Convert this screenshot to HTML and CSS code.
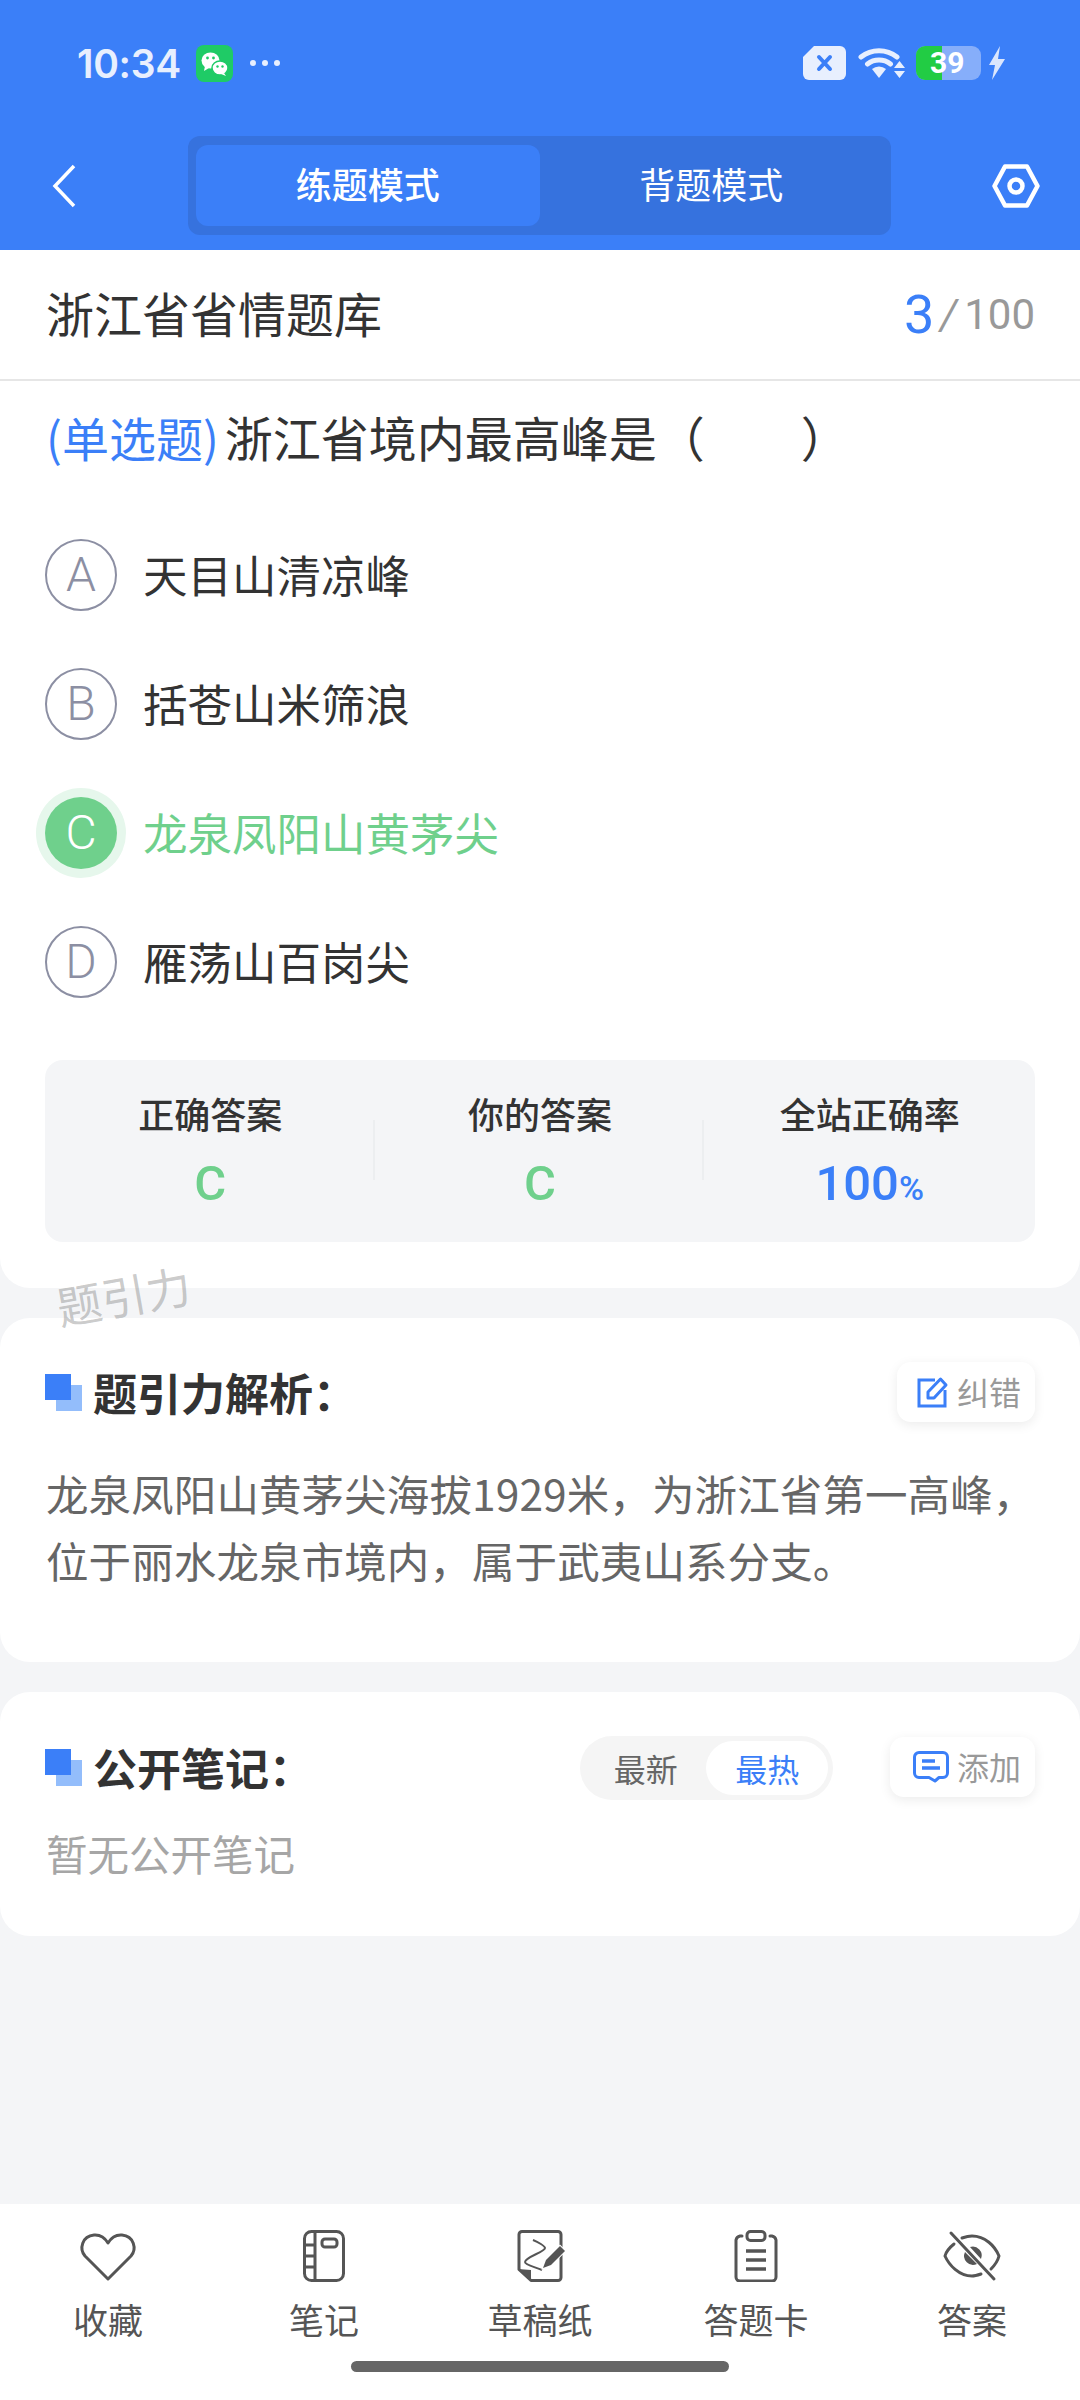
FILE: index.html
```html
<!DOCTYPE html>
<html lang="zh-CN">
<head>
    <meta charset="UTF-8">
    <meta name="viewport" content="width=device-width, initial-scale=1.0">
    <title>练题模式</title>
    <link rel="stylesheet" href="styles.css">
</head>
<body>
    <header class="top">
        <div class="status">
            <div class="status-left">
                <span class="time">10:34</span>
                <svg class="wechat" viewBox="0 0 37 37"><rect width="37" height="37" rx="8" fill="#1fcb66"/><ellipse cx="14.5" cy="15.5" rx="9" ry="8" fill="#fff"/><path d="M9 21l-1 5 5-3z" fill="#fff"/><ellipse cx="24" cy="23" rx="8" ry="7" fill="#fff" stroke="#1fcb66" stroke-width="1.5"/><path d="M28 28l2 3-5-2z" fill="#fff"/><circle cx="11.5" cy="13" r="1.4" fill="#1fcb66"/><circle cx="17.5" cy="13" r="1.4" fill="#1fcb66"/><circle cx="21.5" cy="21.5" r="1.2" fill="#1fcb66"/><circle cx="26.5" cy="21.5" r="1.2" fill="#1fcb66"/></svg>
                <span class="dots"><i></i><i></i><i></i></span>
            </div>
            <div class="status-right">
                <svg class="sim" viewBox="0 0 43 34"><path d="M11 0h26a6 6 0 0 1 6 6v22a6 6 0 0 1-6 6H6a6 6 0 0 1-6-6V11z" fill="#e8effe"/><path d="M16 11l11 12M27 11L16 23" stroke="#3b7ff8" stroke-width="4" stroke-linecap="round"/></svg>
                <svg class="wifi" viewBox="0 0 48 34"><path d="M3 11a29 29 0 0 1 36 0M9.500 18a19 19 0 0 1 23 0" fill="none" stroke="#e8effe" stroke-width="5" stroke-linecap="round"/><path d="M14 23a11 11 0 0 1 14 0l-7 9z" fill="#e8effe"/><path d="M36 22h11l-5.500-7zM36 25h11l-5.500 7z" fill="#e8effe"/></svg>
                <div class="battery"><div class="battery-fill"></div><span class="battery-num">39</span></div>
                <svg class="bolt" viewBox="0 0 18 34"><path d="M12 0L1 19h6L4 34l13-21h-7z" fill="#dbe6fd"/></svg>
            </div>
        </div>
        <nav class="nav">
            <svg class="back" viewBox="0 0 24 44"><path d="M22 2L3 22l19 20" fill="none" stroke="#fff" stroke-width="3.500"/></svg>
            <div class="mode-tabs">
                <div class="mode-tab active">练题模式</div>
                <div class="mode-tab">背题模式</div>
            </div>
            <svg class="gear" viewBox="0 0 48 44"><path d="M13 2.500h22L45.500 22 35 41.500H13L2.500 22z" fill="none" stroke="#fff" stroke-width="4.500" stroke-linejoin="round"/><circle cx="24" cy="22" r="6.500" fill="none" stroke="#fff" stroke-width="4.500"/></svg>
        </nav>
    </header>

    <section class="question-card">
        <div class="subject">
            <span class="subject-name">浙江省省情题库</span>
            <span class="count"><b>3</b><i>/</i>100</span>
        </div>
        <div class="stem"><span class="stem-type">(单选题)</span>浙江省境内最高峰是（　　）</div>
        <div class="option"><span class="letter">A</span><span class="option-text">天目山清凉峰</span></div>
        <div class="option"><span class="letter">B</span><span class="option-text">括苍山米筛浪</span></div>
        <div class="option right"><span class="letter">C</span><span class="option-text">龙泉凤阳山黄茅尖</span></div>
        <div class="option"><span class="letter">D</span><span class="option-text">雁荡山百岗尖</span></div>
        <div class="stats">
            <div class="stat"><p>正确答案</p><strong class="green">C</strong></div>
            <div class="stat-line"></div>
            <div class="stat"><p>你的答案</p><strong class="green">C</strong></div>
            <div class="stat-line"></div>
            <div class="stat"><p>全站正确率</p><strong class="blue">100<small>%</small></strong></div>
        </div>
    </section>
    <div class="watermark">题引力</div>

    <section class="card analysis">
        <div class="card-head">
            <span class="blocks"></span>
            <h2>题引力解析：</h2>
            <div class="mini-btn fix">
                <svg viewBox="0 0 32 32" width="32" height="32"><path d="M18 4H2v26h26V14" fill="none" stroke="#3b7ff8" stroke-width="3"/><path d="M11 16v6h6L29 9l-5.500-6z" fill="none" stroke="#3b7ff8" stroke-width="3" stroke-linejoin="round"/></svg>
                <span>纠错</span>
            </div>
        </div>
        <p class="analysis-text">龙泉凤阳山黄茅尖海拔1929米，为浙江省第一高峰，<br>位于丽水龙泉市境内，属于武夷山系分支。</p>
    </section>

    <section class="card notes">
        <div class="card-head">
            <span class="blocks"></span>
            <h2>公开笔记：</h2>
            <div class="sort">
                <span>最新</span>
                <span class="active">最热</span>
            </div>
            <div class="mini-btn">
                <svg viewBox="0 0 36 32" width="36" height="32"><path d="M6 1.500h24a4.500 4.500 0 0 1 4.500 4.500v16a4.500 4.500 0 0 1-4.500 4.500h-4L22 30l-6-3.500H6A4.500 4.500 0 0 1 1.500 22V6A4.500 4.500 0 0 1 6 1.500z" fill="none" stroke="#3b7ff8" stroke-width="3" stroke-linejoin="round"/><path d="M9 10h13M9 17h18" stroke="#3b7ff8" stroke-width="3.500"/></svg>
                <span>添加</span>
            </div>
        </div>
        <p class="empty">暂无公开笔记</p>
    </section>

    <footer class="tabbar">
        <div class="tab-items">
            <div class="tab-item">
                <svg viewBox="0 0 56 52"><path d="M28 49L5 26C-1 19 2 6 14 5c6-.5 11 3 14 8 3-5 8-8.500 14-8 12 1 15 14 9 21z" fill="none" stroke="#555" stroke-width="3" stroke-linejoin="round"/></svg>
                <span>收藏</span>
            </div>
            <div class="tab-item">
                <svg viewBox="0 0 56 52"><rect x="8.500" y="1.500" width="39" height="49" rx="7" fill="none" stroke="#555" stroke-width="3"/><path d="M19 2v48M9 15h10M9 26h10M9 37h10" stroke="#555" stroke-width="3" fill="none"/><rect x="26" y="9" width="15" height="8" rx="3" fill="none" stroke="#555" stroke-width="3"/></svg>
                <span>笔记</span>
            </div>
            <div class="tab-item">
                <svg viewBox="0 0 60 52"><path d="M21 50.500h27a3 3 0 0 0 3-3V4.500a3 3 0 0 0-3-3H12a3 3 0 0 0-3 3v35z" fill="none" stroke="#555" stroke-width="3" stroke-linejoin="round"/><path d="M8 39l13 1v11z" fill="#555"/><path d="M23 10c5 2 12 6 12 8 0 4-20 9-20 14 0 3 10 5 17 8" fill="none" stroke="#555" stroke-width="2"/><path d="M33 38l3-8 14-14 5 5-14 14z" fill="#555" stroke="#fff" stroke-width="2" paint-order="stroke"/></svg>
                <span>草稿纸</span>
            </div>
            <div class="tab-item">
                <svg viewBox="0 0 56 52"><path d="M14 6h-2a5 5 0 0 0-4 4v37a4 4 0 0 0 4 4h32a4 4 0 0 0 4-4V10a5 5 0 0 0-4-4h-2" fill="none" stroke="#555" stroke-width="3" stroke-linecap="round"/><rect x="19" y="1.500" width="18" height="9" rx="3.500" fill="none" stroke="#555" stroke-width="3"/><path d="M18 21h20M18 30h20M18 39h20" stroke="#555" stroke-width="3.500" fill="none"/></svg>
                <span>答题卡</span>
            </div>
            <div class="tab-item">
                <svg viewBox="0 0 60 52"><path d="M12 14C7 18 4 22 3 26c4 9 14 20 27 20 3 0 6-1 9-2M20 8c3-1 6-2 10-2 13 0 23 10 27 20-1 4-4 9-8 13" fill="none" stroke="#555" stroke-width="3" stroke-linecap="round"/><path d="M9 3l43 46" stroke="#555" stroke-width="3" stroke-linecap="round"/><path d="M23 22a9 9 0 0 0 12 12zM28 17a9 9 0 0 1 11 12z" fill="#555"/></svg>
                <span>答案</span>
            </div>
        </div>
        <div class="home-bar"></div>
    </footer>
</body>
</html>
```

FILE: styles.css
```css
* {
    box-sizing: border-box;
}

body {
    font-family: "Noto Sans CJK SC", "Noto Sans", sans-serif;
    margin: 0;
    width: 1080px;
    height: 2400px;
    display: flex;
    flex-direction: column;
    position: relative;
    overflow: hidden;
    background-color: #f4f5f7;
    color: #333;
}

/* Blue header */
.top {
    height: 250px;
    background-color: #3b7ff8;
}

.status {
    height: 126px;
    padding: 0 74px 0 77px;
    display: flex;
    justify-content: space-between;
    align-items: center;
}

.status-left,
.status-right {
    display: flex;
    align-items: center;
}

.time {
    font-family: Inter, sans-serif;
    font-size: 39px;
    font-weight: 600;
    color: #e8effe;
    letter-spacing: -0.3px;
    width: 119px;
}

.wechat {
    width: 37px;
    height: 37px;
}

.dots {
    display: flex;
    gap: 6px;
    margin-left: 17px;
}

.dots i {
    width: 6px;
    height: 6px;
    border-radius: 50%;
    background-color: #e8effe;
}

.sim {
    width: 43px;
    height: 34px;
}

.wifi {
    width: 48px;
    height: 34px;
    margin-left: 12px;
}

.battery {
    width: 65px;
    height: 34px;
    margin-left: 10px;
    border-radius: 9px;
    background-color: #86aefa;
    position: relative;
}

.battery-fill {
    width: 26px;
    height: 34px;
    border-radius: 9px 0 0 9px;
    background-color: #22cc44;
}

.battery-num {
    position: absolute;
    left: 14px;
    top: 0;
    font-family: Roboto, sans-serif;
    font-size: 30px;
    line-height: 34px;
    font-weight: 700;
    color: #fff;
}

.bolt {
    width: 18px;
    height: 34px;
    margin-left: 7px;
}

.nav {
    height: 124px;
    padding: 10px 40px 15px 52px;
    display: flex;
    justify-content: space-between;
    align-items: center;
}

.back {
    width: 24px;
    height: 44px;
}

.gear {
    width: 48px;
    height: 44px;
}

.mode-tabs {
    width: 703px;
    height: 99px;
    padding: 9px 8px;
    margin-left: 11px;
    background-color: #3672de;
    border-radius: 12px;
    display: flex;
}

.mode-tab {
    width: 344px;
    height: 81px;
    font-size: 36px;
    line-height: 76px;
    text-align: center;
    color: #fff;
    border-radius: 12px;
}

.mode-tab.active {
    background-color: #3b7ff8;
    font-weight: 500;
}

/* Question */
.question-card {
    height: 1038px;
    background-color: #fff;
    border-radius: 0 0 30px 30px;
}

.subject {
    height: 131px;
    padding: 0 45px 0 46px;
    display: flex;
    justify-content: space-between;
    align-items: center;
    border-bottom: 2px solid #e6e6e6;
}

.subject-name {
    font-size: 48px;
    margin-bottom: 5px;
}

.count {
    font-family: Roboto, sans-serif;
    font-size: 42px;
    color: #999;
    display: flex;
    align-items: center;
}

.count b {
    font-size: 54px;
    font-weight: 400;
    color: #3b7ff8;
}

.count i {
    margin: 0 7px 0 6px;
}

.stem {
    height: 129px;
    padding: 26px 0 0 46px;
    font-size: 48px;
    line-height: 58px;
}

.stem-type {
    color: #3b7ff8;
    font-size: 47px;
    margin-right: 6px;
}

.option {
    height: 129px;
    padding-left: 45px;
    display: flex;
    align-items: center;
    gap: 26px;
    font-size: 44.5px;
}

.option-text {
    margin-bottom: 3px;
}

.letter {
    width: 72px;
    height: 72px;
    border: 2px solid #8c8fa3;
    border-radius: 50%;
    font-family: Roboto, sans-serif;
    font-size: 48px;
    font-weight: 300;
    color: #8c8fa3;
    display: flex;
    align-items: center;
    justify-content: center;
}

.option.right {
    color: #6fd08c;
}

.option.right .letter {
    border: none;
    background-color: #6fd08c;
    color: #fff;
    box-shadow: 0 0 0 9px #e6f7ec;
}

.stats {
    margin: 34px 45px 0;
    height: 182px;
    background-color: #f4f5f7;
    border-radius: 18px;
    display: flex;
}

.stat {
    flex: 1;
    text-align: center;
}

.stat p {
    margin: 31px 0 0;
    font-size: 36px;
    line-height: 44px;
    font-weight: 500;
}

.stat strong {
    display: block;
    margin-top: 21px;
    font-family: Roboto, sans-serif;
    font-size: 49px;
    line-height: 56px;
    font-weight: 500;
}

.stat small {
    font-size: 34px;
}

.green {
    color: #6fd08c;
}

.blue {
    color: #3b7ff8;
}

.stat-line {
    width: 2px;
    height: 60px;
    margin: 60px 0 0 -3px;
    background-color: #eceef0;
}

.watermark {
    position: absolute;
    left: 56px;
    top: 1267px;
    font-size: 45px;
    line-height: 56px;
    color: rgba(120, 120, 120, 0.4);
    transform: rotate(-10deg);
}

/* Cards below the question */
.card {
    margin-top: 30px;
    background-color: #fff;
    border-radius: 30px;
    padding: 0 45px;
}

.analysis {
    height: 344px;
    padding-top: 44px;
}

.notes {
    height: 244px;
    padding-top: 45px;
}

.card-head {
    display: flex;
    align-items: center;
    height: 60px;
}

.blocks {
    width: 37px;
    height: 37px;
    position: relative;
    flex-shrink: 0;
    margin-right: 11px;
}

.blocks::before,
.blocks::after {
    content: "";
    position: absolute;
    width: 26px;
    height: 26px;
}

.blocks::before {
    left: 11px;
    top: 11px;
    background-color: #93bdfb;
}

.blocks::after {
    left: 0;
    top: 0;
    background-color: #3b7ff8;
}

.card-head h2 {
    margin: 0;
    font-size: 44px;
    line-height: 60px;
    font-weight: 700;
    flex: 1;
    color: #333;
}

.mini-btn {
    height: 60px;
    padding: 0 14px 0 23px;
    display: flex;
    align-items: center;
    gap: 8px;
    background-color: #fff;
    border-radius: 14px;
    box-shadow: 0 3px 12px rgba(0, 0, 0, 0.08);
    font-size: 32px;
    color: #999;
}

.mini-btn.fix {
    padding-left: 20px;
}

.mini-btn span {
    margin-bottom: 3px;
}

.sort {
    width: 253px;
    height: 64px;
    margin: 2px 57px 0 0;
    padding: 5px;
    display: flex;
    align-items: center;
    background-color: #f5f5f5;
    border-radius: 32px;
    font-size: 32px;
    color: #666;
}

.sort span {
    width: 122px;
    line-height: 54px;
    text-align: center;
    border-radius: 27px;
}

.sort .active {
    background-color: #fff;
    color: #3b7ff8;
}

.analysis-text {
    margin: 37px -20px 0 1px;
    font-size: 42.5px;
    letter-spacing: 0.1px;
    line-height: 67px;
    color: #666;
}

.empty {
    margin: 26px 0 0 1px;
    font-size: 41.5px;
    line-height: 60px;
    color: #a6a6a6;
}

/* Bottom bar */
.tabbar {
    margin-top: auto;
    height: 196px;
    background-color: #fff;
}

.tab-items {
    display: flex;
    padding-top: 26px;
}

.tab-item {
    width: 216px;
    display: flex;
    flex-direction: column;
    align-items: center;
    font-size: 35px;
    line-height: 48px;
    color: #555;
}

.tab-item svg {
    height: 52px;
    width: 60px;
    margin-bottom: 13px;
}

.home-bar {
    width: 378px;
    height: 11px;
    margin: 18px auto 0;
    border-radius: 6px;
    background-color: #666;
}
```
